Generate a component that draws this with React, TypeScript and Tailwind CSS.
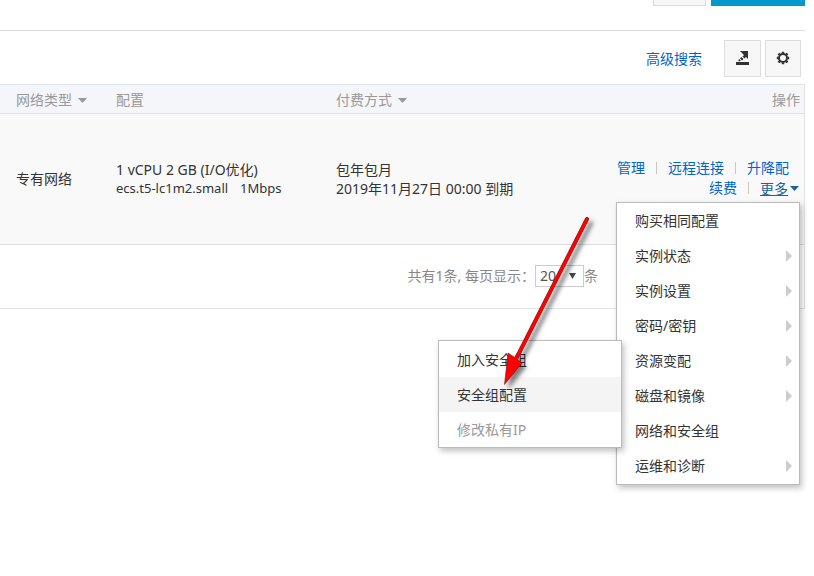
import React from "react";

type MenuEntry = { label: string; hasChildren?: boolean };

const menuEntries: MenuEntry[] = [
  { label: "购买相同配置" },
  { label: "实例状态", hasChildren: true },
  { label: "实例设置", hasChildren: true },
  { label: "密码/密钥", hasChildren: true },
  { label: "资源变配", hasChildren: true },
  { label: "磁盘和镜像", hasChildren: true },
  { label: "网络和安全组" },
  { label: "运维和诊断", hasChildren: true },
];

function CaretDown({ className = "" }: { className?: string }) {
  return (
    <svg width="9" height="5" viewBox="0 0 9 5" className={`inline-block ${className}`} aria-hidden="true">
      <path d="M0 0h9L4.5 5z" fill="currentColor" />
    </svg>
  );
}

function Divider() {
  return <span className="h-3 w-px bg-[#cfc8c0]" />;
}

function ActionLink({ children }: { children: React.ReactNode }) {
  return (
    <a href="#" className="text-[#0066cc]">
      {children}
    </a>
  );
}

function Submenu() {
  return (
    <ul className="absolute -left-[179px] -top-[73px] z-20 w-46 border border-[#bbb] bg-white shadow-[2px_3px_6px_rgba(0,0,0,0.25)]">
      <li>
        <button className="block h-9 w-full px-[18px] text-left">加入安全组</button>
      </li>
      <li>
        <button className="block h-[35px] w-full bg-[#f4f4f4] px-[18px] text-left">安全组配置</button>
      </li>
      <li>
        <button disabled className="block h-[35px] w-full px-[18px] text-left text-[#999]">
          修改私有IP
        </button>
      </li>
    </ul>
  );
}

function MoreMenu() {
  return (
    <div className="absolute -right-px top-full z-10 mt-1 w-46 border border-[#bbb] bg-white pb-px text-left text-[#333] shadow-[2px_3px_6px_rgba(0,0,0,0.25)]">
      <ul>
        {menuEntries.map((entry) => (
          <li key={entry.label} className="relative">
            <button className="flex h-[35px] w-full items-center justify-between pl-[18px] pr-[7px]">
              {entry.label}
              {entry.hasChildren && (
                <svg width="6" height="12" viewBox="0 0 6 12" aria-hidden="true">
                  <path d="M0 0l6 6-6 6z" fill="#ccc" />
                </svg>
              )}
            </button>
            {entry.label === "网络和安全组" && <Submenu />}
          </li>
        ))}
      </ul>
    </div>
  );
}

function Pointer() {
  return (
    <svg
      width="110"
      height="190"
      viewBox="0 0 110 190"
      className="pointer-events-none absolute left-[490px] top-[205px] z-30 drop-shadow-[4px_4px_2px_rgba(0,0,0,0.5)]"
      aria-hidden="true"
    >
      <path d="M97 14L24 158" stroke="#7a1a1a" strokeWidth="4" strokeLinecap="round" />
      <path d="M14.500 179.500L18 148l6 4 8 6z" fill="#f00" stroke="#7a1a1a" strokeWidth="0.600" />
      <path d="M97 14L24 158" stroke="#f00" strokeWidth="3" strokeLinecap="round" />
    </svg>
  );
}

export default function App() {
  return (
    <main className="relative min-h-screen bg-white pr-[9px] font-['Noto_Sans','Noto_Sans_CJK_SC',sans-serif] text-sm leading-[19px] text-[#333]">
      <div className="flex h-[31px] items-start justify-end gap-[5px] border-b border-[#ddd]">
        <button aria-label="刷新" className="h-[6px] w-[53px] border border-t-0 border-[#ddd] bg-[#f7f7f7]" />
        <button aria-label="创建实例" className="h-[6px] w-[94px] bg-[#0099cc]" />
      </div>

      <div className="flex h-[53px] items-center justify-end pr-1 pt-[2px]">
        <a href="#" className="mr-[22px] text-[#0066cc]">
          高级搜索
        </a>
        <button aria-label="导出" className="mr-1 flex h-[37px] w-[37px] items-center justify-center border border-[#ddd] bg-[#f7f7f7]">
          <svg width="15" height="15" viewBox="0 0 15 15" aria-hidden="true">
            <path d="M1 11h13v3H1z M5 0h8v8l-2-2-1.500 1.500-2-2L9 4.200 7 2z M6.500 6l2 2-1.500 1.500-2-2z M4.200 8l1.500 1.500-.7.700H3.500V8.700z" fill="#333" />
          </svg>
        </button>
        <button aria-label="设置" className="flex h-[37px] w-9 items-center justify-center border border-[#ddd] bg-[#f7f7f7] pb-[2px]">
          <svg width="14" height="14" viewBox="0 0 14 14" aria-hidden="true">
            <circle cx="7" cy="7" r="4" fill="none" stroke="#333" strokeWidth="2" />
            <path
              d="M7 .8v2M7 11.200v2M.8 7h2M11.200 7h2M2.500 2.500l1.400 1.400M10.100 10.100l1.400 1.400M2.500 11.500l1.400-1.400M10.100 3.900l1.400-1.400"
              stroke="#333"
              strokeWidth="2.400"
            />
          </svg>
        </button>
      </div>

      <section className="border-y border-r border-[#dde4e9]">
        <table className="w-full table-fixed border-separate border-spacing-0">
          <thead>
            <tr className="h-[29px] bg-[#f5f6fa] text-left text-[#999]">
              <th className="w-[100px] border-b border-[#dde4e9] p-0 pl-4 font-normal">
                网络类型
                <CaretDown className="ml-[6px] align-middle" />
              </th>
              <th className="w-[220px] border-b border-[#dde4e9] p-0 pl-4 font-normal">配置</th>
              <th className="border-b border-[#dde4e9] p-0 pl-4 font-normal">
                付费方式
                <CaretDown className="ml-[6px] align-middle" />
              </th>
              <th className="w-[240px] border-b border-[#dde4e9] p-0 pr-1 text-right font-normal">操作</th>
            </tr>
          </thead>
          <tbody>
            <tr className="h-[131px] bg-[#f9f9f9]">
              <td className="border-b border-[#ddd] p-0 pb-[2px] pl-4">专有网络</td>
              <td className="border-b border-[#ddd] p-0 pl-4">
                <div>1 vCPU 2 GB (I/O优化)</div>
                <div className="text-[13px]">
                  <span className="mr-3">ecs.t5-lc1m2.small</span>
                  <span>1Mbps</span>
                </div>
              </td>
              <td className="border-b border-[#ddd] p-0 pl-4">
                <div>包年包月</div>
                <div>2019年11月27日 00:00 到期</div>
              </td>
              <td className="border-b border-[#ddd] p-0 pb-[2px]">
                <div className="flex items-center justify-end gap-[11px] pr-[15px]">
                  <ActionLink>管理</ActionLink>
                  <Divider />
                  <ActionLink>远程连接</ActionLink>
                  <Divider />
                  <ActionLink>升降配</ActionLink>
                </div>
                <div className="relative mr-[5px] flex items-center justify-end gap-[11px]">
                  <ActionLink>续费</ActionLink>
                  <Divider />
                  <button aria-haspopup="menu" aria-expanded="true" className="flex items-center gap-[2px] pt-[2px] text-[#246193]">
                    <span className="underline">更多</span>
                    <CaretDown />
                  </button>
                  <MoreMenu />
                </div>
              </td>
            </tr>
          </tbody>
        </table>

        <div className="flex h-[63px] items-center justify-end pb-[2px] pr-[206px] text-[#888]">
          <label htmlFor="page-size">共有1条, 每页显示：</label>
          <span className="relative flex">
            <select
              id="page-size"
              defaultValue="20"
              className="h-[22px] w-[49px] appearance-none border border-[#ccc] bg-white pl-1 text-[#555]"
            >
              <option>10</option>
              <option>20</option>
              <option>50</option>
            </select>
            <svg width="7" height="6" viewBox="0 0 7 6" className="pointer-events-none absolute right-2 top-2" aria-hidden="true">
              <path d="M0 0h7L3.500 6z" fill="#444" />
            </svg>
          </span>
          <span>条</span>
        </div>
      </section>

      <Pointer />
    </main>
  );
}
